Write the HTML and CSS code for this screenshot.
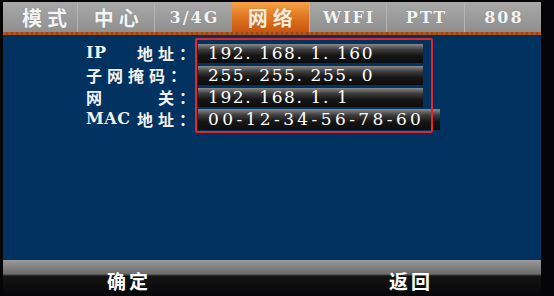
FILE: index.html
```html
<!DOCTYPE html>
<html lang="zh">
<head>
    <meta charset="UTF-8" />
    <title>网络设置</title>
    <link rel="stylesheet" href="styles.css">
</head>
<body>
    <div class="screen">
        <!-- top menu -->
        <div class="tabs">
            <div class="tab">模式</div>
            <div class="tab">中心</div>
            <div class="tab latin">3/4G</div>
            <div class="tab active">网络</div>
            <div class="tab latin">WIFI</div>
            <div class="tab latin">PTT</div>
            <div class="tab latin">808</div>
        </div>
        <div class="tabline"></div>

        <!-- network info -->
        <div class="content">
            <div class="form">
                <div class="row">
                    <div class="label"><span class="latin">IP</span><span>地址：</span></div>
                    <div class="value">192. 168. 1. 160</div>
                </div>
                <div class="row">
                    <div class="label"><span>子网掩码：</span></div>
                    <div class="value">255. 255. 255. 0</div>
                </div>
                <div class="row">
                    <div class="label"><span>网</span><span>关：</span></div>
                    <div class="value">192. 168. 1. 1</div>
                </div>
                <div class="row">
                    <div class="label"><span class="latin">MAC</span><span>地址：</span></div>
                    <div class="value wide">00-12-34-56-78-60</div>
                </div>
            </div>
            <div class="mark"></div>
        </div>

        <!-- soft keys -->
        <div class="softkeys">
            <span>确定</span>
            <span>返回</span>
        </div>
    </div>
</body>
</html>
```

FILE: styles.css
```css
body {
    margin: 0;
    background-color: #050508;
    font-family: "DejaVu Serif", "Liberation Serif", "Noto Sans CJK SC", serif;
    color: #FFFFFF;
}
.screen {
    width: 538px;
    height: 294px;
    margin-left: 3px;
    padding-top: 2px;
    display: flex;
    flex-direction: column;
}

/* Menu tabs */
.tabs {
    display: grid;
    grid-template-columns: 74px repeat(6, 1fr);
    height: 30px;
    background: linear-gradient(#a9a9a9, #8f8f8f);
}
.tab {
    display: flex;
    align-items: center;
    justify-content: center;
    font-family: "Noto Sans CJK SC", sans-serif;
    font-size: 20px;
    font-weight: 700;
    letter-spacing: 5px;
    padding-left: 5px;
    color: #F4F4F4;
    border-left: 1px solid #B5B5B5;
    text-shadow: 0 0 1px #777;
}
.tab:first-child {
    border-left: none;
    padding-left: 14px;
}
.tab.latin {
    font-family: "DejaVu Serif", serif;
    font-size: 16px;
    font-weight: 700;
    letter-spacing: 2px;
    padding-left: 2px;
}
.tab.active {
    background: linear-gradient(#F5A447, #E27A22 45%, #C9550F);
    color: #FFE9D2;
    border-left: none;
}
.tabline {
    height: 3px;
    background: repeating-linear-gradient(90deg, #B2561E 0 3px, #9B4618 3px 5px);
}

/* Content area */
.content {
    flex: 1;
    position: relative;
    background-color: #02325F;
    padding: 7px 0 0 83px;
}
.form {
    display: flex;
    flex-direction: column;
}
.row {
    display: flex;
    align-items: center;
    height: 22px;
}
.label {
    width: 114px;
    display: flex;
    justify-content: space-between;
    font-family: "Noto Sans CJK SC", sans-serif;
    font-size: 16px;
    font-weight: 700;
    letter-spacing: 5px;
    line-height: 20px;
    color: #F2F2F2;
    margin-right: -2px;
}
.label .latin {
    font-family: "DejaVu Serif", serif;
    font-size: 16px;
    letter-spacing: 0.5px;
}
.value {
    width: 215px;
    height: 19px;
    padding-left: 10px;
    background: linear-gradient(#8A8A8A, #3C3C3C 30%, #161616 60%, #0C0C0C);
    font-size: 17px;
    line-height: 19px;
    letter-spacing: 1.6px;
    white-space: pre;
}
.value.wide {
    width: 232px;
    height: 21px;
    line-height: 21px;
    letter-spacing: 3.4px;
}

/* Red annotation frame drawn on top of the screen */
.mark {
    position: absolute;
    left: 192px;
    top: 3px;
    width: 234px;
    height: 91px;
    border: 2px solid #E3262B;
    border-radius: 2px;
}

/* Soft keys */
.softkeys {
    height: 36px;
    display: flex;
    justify-content: space-between;
    align-items: center;
    padding: 4px 108px 0 104px;
    box-sizing: border-box;
    background: linear-gradient(#9A9A9A, #6A6A6A 14px, #141414 16px, #060609);
    font-family: "Noto Sans CJK SC", sans-serif;
    font-size: 19px;
    font-weight: 700;
    letter-spacing: 3px;
}
```
